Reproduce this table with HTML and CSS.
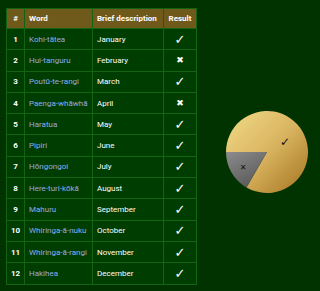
FILE: index.html
```html
<!DOCTYPE html>
<html>
<head>
<meta charset="utf-8">
<link rel="stylesheet" href="styles.css">
</head>
<body>
<div class="page">
  <table class="months">
    <thead>
      <tr><th class="num">#</th><th class="word">Word</th><th class="desc">Brief description</th><th class="res">Result</th></tr>
    </thead>
    <tbody>
      <tr><td class="num">1</td><td class="word">Kohi-tātea</td><td class="desc">January</td><td class="res ok">✓</td></tr>
      <tr><td class="num">2</td><td class="word">Hui-tanguru</td><td class="desc">February</td><td class="res bad">✖</td></tr>
      <tr><td class="num">3</td><td class="word">Poutū-te-rangi</td><td class="desc">March</td><td class="res ok">✓</td></tr>
      <tr><td class="num">4</td><td class="word">Paenga-whāwhā</td><td class="desc">April</td><td class="res bad">✖</td></tr>
      <tr><td class="num">5</td><td class="word">Haratua</td><td class="desc">May</td><td class="res ok">✓</td></tr>
      <tr><td class="num">6</td><td class="word">Pipiri</td><td class="desc">June</td><td class="res ok">✓</td></tr>
      <tr><td class="num">7</td><td class="word">Hōngongoi</td><td class="desc">July</td><td class="res ok">✓</td></tr>
      <tr><td class="num">8</td><td class="word">Here-turi-kōkā</td><td class="desc">August</td><td class="res ok">✓</td></tr>
      <tr><td class="num">9</td><td class="word">Mahuru</td><td class="desc">September</td><td class="res ok">✓</td></tr>
      <tr><td class="num">10</td><td class="word">Whiringa-ā-nuku</td><td class="desc">October</td><td class="res ok">✓</td></tr>
      <tr><td class="num">11</td><td class="word">Whiringa-ā-rangi</td><td class="desc">November</td><td class="res ok">✓</td></tr>
      <tr><td class="num">12</td><td class="word">Hakihea</td><td class="desc">December</td><td class="res ok">✓</td></tr>
    </tbody>
  </table>
  <svg class="pie" width="123" height="283" viewBox="0 0 123 283">
    <defs>
      <linearGradient id="gold" x1="0" y1="0" x2="1" y2="1">
        <stop offset="0" stop-color="#f2dc88"/>
        <stop offset="0.5" stop-color="#d9b460"/>
        <stop offset="1" stop-color="#a4731f"/>
      </linearGradient>
      <linearGradient id="grey" x1="0" y1="0" x2="0.6" y2="1">
        <stop offset="0" stop-color="#8c8c8c"/>
        <stop offset="1" stop-color="#5a5a5a"/>
      </linearGradient>
    </defs>
    <path d="M70 144 L29 144 A41 41 0 1 1 49.5 179.5 Z" fill="url(#gold)"/>
    <path d="M70 144 L49.5 179.5 A41 41 0 0 1 29 144 Z" fill="url(#grey)"/>
    <text x="88" y="138" class="lbl ok-l">✓</text>
    <text x="46" y="162" class="lbl bad-l">✕</text>
  </svg>
</div>
</body>
</html>
```
FILE: styles.css
```css
html, body {
  margin: 0;
  padding: 0;
  background: #013301;
}
.page {
  display: flex;
  align-items: flex-start;
  padding: 8px 0 0 6px;
  font-family: Roboto, "Liberation Sans", sans-serif;
  font-size: 8px;
}
.months {
  border-collapse: collapse;
  width: 191px;
  table-layout: fixed;
  background: #003d00;
  border: 1px solid #136313;
}
.months th, .months td {
  border: 1px solid #136313;
  padding: 0 0 0 4px;
  text-align: left;
  white-space: nowrap;
  overflow: hidden;
}
.months th {
  background: #6f591b;
  color: #fff;
  font-weight: bold;
  height: 19px;
}
.months td {
  height: 20.3px;
  color: #ffffff;
}
.months .num { width: 17px; text-align: center; padding: 0; font-weight: bold; }
.months .word { width: 63px; }
.months .desc { width: 66px; }
.months .res { width: 32px; text-align: center; padding: 0; }
.months td.word { color: #92abea; }
.months td.ok {
  font-family: "DejaVu Sans", sans-serif;
  font-size: 13px;
  font-weight: bold;
  color: #fff;
}
.months td.bad {
  font-family: "DejaVu Sans", sans-serif;
  font-size: 9px;
  color: #fff;
}
.pie {
  display: block;
}
.lbl {
  font-family: "DejaVu Sans", sans-serif;
  fill: #111;
  text-anchor: middle;
}
.ok-l { font-size: 12px; }
.bad-l { font-size: 8px; font-weight: bold; }
```
